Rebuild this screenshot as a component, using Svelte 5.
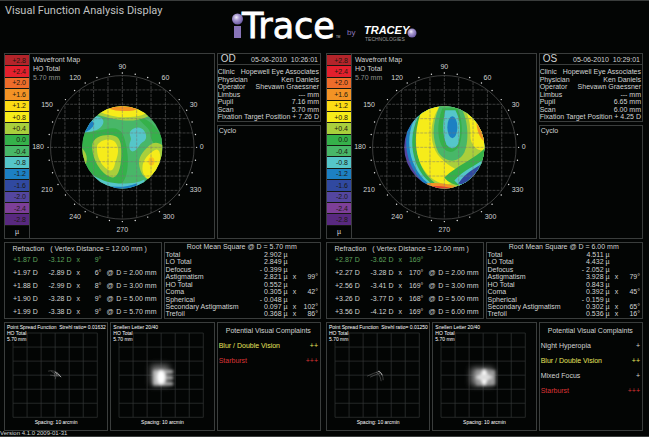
<script lang="ts">
  interface Complaint {
    name: string;
    grade: string;
    tone: 'plain' | 'warn' | 'alert';
  }

  interface Eye {
    id: string;
    time: string;
    info: [string, string][];
    diameter: string;
    refraction: string[][];
    rms: string[][];
    strehl: string;
    complaints: Complaint[];
  }

  const scale = [
    { label: '+2.8', color: '#b3242a' },
    { label: '+2.4', color: '#e3202d' },
    { label: '+2.0', color: '#ee6c2a' },
    { label: '+1.6', color: '#f39325' },
    { label: '+1.2', color: '#fcdc14' },
    { label: '+0.8', color: '#f6ec1a' },
    { label: '+0.4', color: '#a9cf3c' },
    { label: '0.0', color: '#35b14a' },
    { label: '-0.4', color: '#48b768' },
    { label: '-0.8', color: '#55c6c9' },
    { label: '-1.2', color: '#1c80c3' },
    { label: '-1.6', color: '#3049a0' },
    { label: '-2.0', color: '#5446a0' },
    { label: '-2.4', color: '#7d3f98' },
    { label: '-2.8', color: '#58297f' }
  ];

  const eyes: Eye[] = [
    {
      id: 'OD',
      time: '05-06-2010  10:26:01',
      info: [
        ['Clinic', 'Hopewell Eye Associates'],
        ['Physician', 'Ken Daniels'],
        ['Operator', 'Shevawn Graessner'],
        ['Limbus', '--- mm'],
        ['Pupil', '7.16 mm'],
        ['Scan', '5.70 mm'],
        ['Fixation Target Position', '+ 7.26 D']
      ],
      diameter: '5.70 mm',
      refraction: [
        ['+1.87 D', '-3.12 D', '9°', ''],
        ['+1.97 D', '-2.89 D', '6°', 'D = 2.00 mm'],
        ['+1.88 D', '-2.99 D', '8°', 'D = 3.00 mm'],
        ['+1.90 D', '-3.28 D', '9°', 'D = 5.00 mm'],
        ['+1.99 D', '-3.38 D', '9°', 'D = 5.70 mm']
      ],
      rms: [
        ['Total', '2.902', ''],
        ['LO Total', '2.849', ''],
        ['Defocus', '- 0.399', ''],
        ['Astigmatism', '2.821', '99°'],
        ['HO Total', '0.552', ''],
        ['Coma', '0.305', '42°'],
        ['Spherical', '- 0.048', ''],
        ['Secondary Astigmatism', '0.097', '102°'],
        ['Trefoil', '0.368', '86°']
      ],
      strehl: '0.01632',
      complaints: [
        { name: 'Blur / Double Vision', grade: '++', tone: 'warn' },
        { name: 'Starburst', grade: '+++', tone: 'alert' }
      ]
    },
    {
      id: 'OS',
      time: '05-06-2010  10:29:01',
      info: [
        ['Clinic', 'Hopewell Eye Associates'],
        ['Physician', 'Ken Daniels'],
        ['Operator', 'Shevawn Graessner'],
        ['Limbus', '--- mm'],
        ['Pupil', '6.65 mm'],
        ['Scan', '6.00 mm'],
        ['Fixation Target Position', '+ 4.25 D']
      ],
      diameter: '6.00 mm',
      refraction: [
        ['+2.87 D', '-3.62 D', '169°', ''],
        ['+2.27 D', '-3.28 D', '170°', 'D = 2.00 mm'],
        ['+2.56 D', '-3.41 D', '169°', 'D = 3.00 mm'],
        ['+3.26 D', '-3.77 D', '168°', 'D = 5.00 mm'],
        ['+3.56 D', '-4.12 D', '169°', 'D = 6.00 mm']
      ],
      rms: [
        ['Total', '4.511', ''],
        ['LO Total', '4.432', ''],
        ['Defocus', '- 2.052', ''],
        ['Astigmatism', '3.928', '79°'],
        ['HO Total', '0.843', ''],
        ['Coma', '0.392', '45°'],
        ['Spherical', '- 0.159', ''],
        ['Secondary Astigmatism', '0.302', '65°'],
        ['Trefoil', '0.536', '16°']
      ],
      strehl: '0.01250',
      complaints: [
        { name: 'Night Hyperopia', grade: '+', tone: 'plain' },
        { name: 'Blur / Double Vision', grade: '++', tone: 'warn' },
        { name: 'Mixed Focus', grade: '+', tone: 'plain' },
        { name: 'Starburst', grade: '+++', tone: 'alert' }
      ]
    }
  ];

  const cx = 92;
  const cy = 93;

  const ticks = Array.from({ length: 36 }, (_, i) => {
    const a = (i * Math.PI) / 18;
    return { x: cx + 74 * Math.cos(a), y: cy - 74 * Math.sin(a) };
  });

  const dialLabels = [
    { text: '90', x: 92, y: 15 },
    { text: '60', x: 135, y: 26 },
    { text: '30', x: 163, y: 53 },
    { text: '0', x: 171, y: 95 },
    { text: '330', x: 165, y: 138 },
    { text: '300', x: 138, y: 164 },
    { text: '270', x: 92, y: 177 },
    { text: '240', x: 45, y: 164 },
    { text: '210', x: 17, y: 138 },
    { text: '180', x: 8, y: 95 },
    { text: '150', x: 17, y: 53 },
    { text: '120', x: 45, y: 26 }
  ];

  const gridLines = [-4, -3, -2, -1, 0, 1, 2, 3, 4].map((n) => n * 14.3);
  const plotLines = [0, 1, 2, 3, 4, 5, 6].map((n) => n * 14 + 9);
</script>

<main>
  <header>
    <h1>Visual Function Analysis Display</h1>
    <svg class="logo" viewBox="0 -7 182 43" role="img" aria-label="iTrace by Tracey Technologies">
      <defs>
        <radialGradient id="ball" cx="0.4" cy="0.35" r="0.65">
          <stop offset="0" stop-color="#f4f0fc" />
          <stop offset="0.4" stop-color="#a99bd0" />
          <stop offset="1" stop-color="#6d5ba6" />
        </radialGradient>
      </defs>
      <rect x="2" y="14" width="7" height="12" fill="#8874b8" />
      <circle cx="5.500" cy="7" r="5.500" fill="url(#ball)" />
      <text class="trace" x="10" y="26">Trace</text>
      <text class="tm" x="104" y="26">TM</text>
      <text class="by" x="115" y="23">by</text>
      <text class="tracey" x="132" y="22">TRACEY</text>
      <text class="tech" x="133" y="29">TECHNOLOGIES</text>
      <circle cx="180" cy="21" r="4.500" fill="url(#ball)" />
    </svg>
  </header>

  <div class="eyes">
    {#each eyes as eye}
      <section class="eye">
        <div class="panel map">
          <div class="scale">
            {#each scale as step}
              <span class="step" style="background: {step.color}">{step.label}</span>
            {/each}
            <span class="unit">µ</span>
          </div>
          <div class="dial">
            <p class="map-title">Wavefront Map<br />HO Total<br /><span class="dim">5.70 mm</span></p>
            <svg viewBox="0 0 183 183" role="img" aria-label="Wavefront map {eye.id}">
              <defs>
                <clipPath id="disc-{eye.id}"><ellipse {cx} cy="93" rx="40" ry="41" /></clipPath>
                <clipPath id="ring-{eye.id}"><circle {cx} {cy} r="71.500" /></clipPath>
              </defs>
              <g clip-path="url(#disc-{eye.id})">
                {#if eye.id === 'OD'}
                  <rect x="50" y="50" width="86" height="86" fill="#48b768" />
                  <path d="M50 78c10 2 22-4 32-4s12 8 14 18 2 20 0 28-6 12-14 12C66 128 50 110 50 90z" fill="#35b14a" />
                  <path d="M106 62c12 2 20 10 26 22l-4 10c-4-4-8-8-8-14s-8-10-14-18z" fill="#35b14a" />
                  <path d="M66 60c8 3 18 5 26 6s18 0 26-4V46H66z" fill="#a9cf3c" />
                  <path d="M68 57c9 4 18 6 26 6s16-1 22-4V46H68z" fill="#f6ec1a" />
                  <path d="M74 52c6 5 26 7 36 2V46H76z" fill="#f39325" />
                  <path d="M50 78c10 0 18-1 22-7 3-5 0-8-6-9l-16 2z" fill="#55c6c9" />
                  <path d="M52 79c6-2 11-5 12-10l-4-4-10 8z" fill="#1c80c3" />
                  <path d="M100 77c4-5 11-5 14 0s2 9-2 11c-3 2-5 8-9 9s-5-6-3-10-2-6 0-10z" fill="#55c6c9" />
                  <path d="M62 92c0-10 12-12 20-11s9 8 9 18-2 23-8 24-21-12-21-31z" fill="#a9cf3c" />
                  <path d="M67 91c3-6 14-8 18-3s3 12 1 17-2 11-6 11-15-10-13-25z" fill="#f6ec1a" />
                  <path d="M50 92c5 4 8 10 6 17l-6 2z" fill="#a9cf3c" />
                  <path d="M109 112c-2-9 4-15 9-20s10-4 14-1v20l-9 16c-7-2-12-5-14-15z" fill="#a9cf3c" />
                  <path d="M112 114c0-9 7-15 12-18s6 4 6 10l-7 20c-7-1-11-6-11-12z" fill="#f6ec1a" />
                  <ellipse cx="121" cy="107" rx="3" ry="4" fill="#fcc41a" />
                  <path d="M62 120c10 7 20 9 30 9s16-1 22-4v12H62z" fill="#55c6c9" />
                  <path d="M76 131c10 2 20 2 30-2l4 8H76z" fill="#1c80c3" />
                {:else}
                  <rect x="50" y="50" width="86" height="86" fill="#5446a0" />
                  <ellipse cx="106" cy="88" rx="52" ry="54" fill="#1c80c3" />
                  <ellipse cx="106" cy="88" rx="49" ry="52" fill="#55c6c9" />
                  <ellipse cx="106" cy="88" rx="46" ry="51" fill="#35b14a" />
                  <ellipse cx="106" cy="88" rx="42" ry="49" fill="#a9cf3c" />
                  <path d="M68 60c5-5 12-8 20-9-8 12-11 26-7 40 4 14 16 20 26 26 5 5-4 11-12 13-22-2-40-30-27-70z" fill="#f6ec1a" />
                  <path d="M114 58c14 6 20 20 20 38-10 2-16-6-16-14s0-14-4-24z" fill="#f6ec1a" />
                  <path d="M124 66c6 6 10 14 9 22-6-4-9-12-9-22z" fill="#f39325" />
                  <path d="M88 50c-9 20-8 36-2 48 6 10 20 12 26 0 5-12 4-34-5-48z" fill="#48b768" />
                  <path d="M90 54c-6 16-5 32 1 40 6 6 12 4 16-3 4-12 3-26-2-37z" fill="#35b14a" />
                  <path d="M93 56c-3 13-3 24 1 34 4 6 9 5 12-1 3-12 2-24-3-33z" fill="#55c6c9" />
                  <ellipse cx="100" cy="73" rx="5" ry="11" fill="#1c80c3" />
                  <path d="M134 92c-10 12-28 18-42 31 4 6 16 10 26 8l16-22z" fill="#35b14a" />
                  <path d="M134 103c-10 8-22 12-32 23l8 8 24-12z" fill="#55c6c9" />
                  <path d="M134 107c-10 6-20 10-28 22l14 4z" fill="#3049a0" />
                  <path d="M74 129c10-1 22 0 32 4v3H76z" fill="#f39325" />
                  <path d="M78 132c8-1 16 0 22 2v2H78z" fill="#e3402d" />
                {/if}
              </g>
              <g class="mesh" clip-path="url(#ring-{eye.id})">
                {#each gridLines as d}
                  <path d="M{cx + d} 20v146M20 {cy + d}h146" />
                {/each}
              </g>
              <circle class="ring" {cx} {cy} r="71.500" />
              {#each ticks as t}
                <circle cx={t.x} cy={t.y} r="0.700" fill="#e8e8e8" />
              {/each}
              {#each dialLabels as l}
                <text x={l.x} y={l.y}>{l.text}</text>
              {/each}
            </svg>
          </div>
        </div>

        <div class="side">
          <div class="panel info">
            <div class="info-head">
              <h2>{eye.id}</h2>
              <span>{eye.time}</span>
            </div>
            <dl>
              {#each eye.info as [key, value]}
                <div><dt>{key}</dt><dd>{value}</dd></div>
              {/each}
            </dl>
          </div>
          <div class="panel cyclo">Cyclo</div>
        </div>

        <div class="panel refraction">
          <table>
            <caption>Refraction &nbsp; ( Vertex Distance = 12.00 mm )</caption>
            <tbody>
              {#each eye.refraction as [sphere, cylinder, axis, zone]}
                <tr class:manifest={!zone}>
                  <td class="sphere">{sphere}</td>
                  <td class="cylinder">{cylinder}</td>
                  <td class="times">x</td>
                  <td class="axis">{axis}</td>
                  <td class="at">{zone ? '@' : ''}</td>
                  <td class="zone">{zone}</td>
                </tr>
              {/each}
            </tbody>
          </table>
        </div>

        <div class="panel rms">
          <table>
            <caption>Root Mean Square @ D = {eye.diameter}</caption>
            <tbody>
              {#each eye.rms as [name, value, axis]}
                <tr>
                  <th scope="row">{name}</th>
                  <td class="value">{value} µ</td>
                  <td class="times">{axis ? 'x' : ''}</td>
                  <td class="angle">{axis}</td>
                </tr>
              {/each}
            </tbody>
          </table>
        </div>

        <figure class="panel plot">
          <p class="plot-title"><span>Point Spread Function &nbsp;Strehl ratio= {eye.strehl}</span><br /><span>HO Total</span><br /><span>5.70 mm</span></p>
          <svg viewBox="0 0 102 96" role="img" aria-label="Point spread function {eye.id}">
            {#each plotLines as p}
              <path class="rule" d="M{p - 1} 10v84M8 {p + 1}h84" />
            {/each}
            <g class="spread">
              {#if eye.id === 'OD'}
                <path d="M43 48q6-2 12 4M45 52l10 1M46 48l7 5M50 48l-1 6M52 49l-2 7" />
                <path class="bright" d="M50 49l4 3 2 2" />
              {:else}
                <path d="M40 53q6-3 13-5M43 54q6-3 10-4M49 49q4 2 5 9M52 48q4 3 4 9" />
                <path class="bright" d="M51 48q3 1 4 4" />
              {/if}
            </g>
          </svg>
          <figcaption>Spacing: 10 arcmin</figcaption>
        </figure>

        <figure class="panel plot">
          <p class="plot-title"><span>Snellen Letter 20/40</span><br /><span>HO Total</span><br /><span>5.70 mm</span></p>
          <svg viewBox="0 0 102 96" role="img" aria-label="Snellen letter {eye.id}">
            <defs>
              <filter id="soft-{eye.id}" x="-1" y="-1" width="3" height="3"><feGaussianBlur stdDeviation="3" /></filter>
              <filter id="edge-{eye.id}" x="-1" y="-1" width="3" height="3"><feGaussianBlur stdDeviation="1.400" /></filter>
            </defs>
            {#each plotLines as p}
              <path class="rule" d="M{p - 1} 10v84M8 {p + 1}h84" />
            {/each}
            {#if eye.id === 'OD'}
              <rect x="40" y="42" width="18" height="20" fill="#777" filter="url(#soft-OD)" />
              <path d="M42 47h20v3h-8v3h8v3h-8v3h8v3H42z" fill="#bbb" filter="url(#edge-OD)" />
              <ellipse cx="50" cy="54" rx="4" ry="7" fill="#fff" filter="url(#edge-OD)" />
            {:else}
              <rect x="38" y="45" width="22" height="17" fill="#888" filter="url(#soft-OS)" />
              <path d="M43 47h19v15H43z" fill="#999" filter="url(#edge-OS)" />
              <ellipse cx="51" cy="54" rx="3" ry="8" fill="#fff" filter="url(#edge-OS)" />
              <ellipse cx="51" cy="54" rx="8" ry="3" fill="#ddd" filter="url(#edge-OS)" />
            {/if}
          </svg>
          <figcaption>Spacing: 10 arcmin</figcaption>
        </figure>

        <div class="panel complaints">
          <h3>Potential Visual Complaints</h3>
          <ul>
            {#each eye.complaints as c}
              <li class={c.tone}><span>{c.name}</span><span>{c.grade}</span></li>
            {/each}
          </ul>
        </div>
      </section>
    {/each}
  </div>

  <footer>Version 4.1.0 2009-01-31</footer>
</main>

<style>
  :global(body) {
    background: #030504;
  }

  main {
    box-sizing: border-box;
    border-top: 1px solid #3a3d3c;
    border-bottom: 1px solid #3a3d3c;
    background: #030504;
    color: #d2d4d3;
    font-family: "Liberation Sans", Arial, sans-serif;
    font-size: 7px;
    line-height: 7px;
  }

  h1,
  h2,
  h3,
  p,
  dl,
  dd,
  ul,
  figure {
    margin: 0;
    padding: 0;
    font-weight: normal;
  }

  svg {
    display: block;
    width: 100%;
  }

  header {
    display: grid;
    grid-template-columns: 1fr 182px 1fr;
    min-height: 52px;
    padding: 0 9px 0 5px;
  }

  h1 {
    padding-top: 3px;
    color: #c0c2c1;
    font-family: Roboto, "Liberation Sans", sans-serif;
    font-size: 11px;
    line-height: 13px;
    white-space: nowrap;
  }

  .logo {
    margin-top: 4px;
    overflow: visible;
  }

  .trace {
    fill: #fff;
    stroke: #fff;
    stroke-width: 0.8px;
    font-family: "DejaVu Sans", sans-serif;
    font-size: 35px;
  }

  .tm {
    fill: #ccc;
    font-size: 3px;
  }

  .by {
    fill: #8874b8;
    font-size: 8px;
  }

  .tracey {
    fill: #fff;
    font-size: 11px;
    font-style: italic;
    font-weight: bold;
  }

  .tech {
    fill: #999;
    font-size: 5px;
  }

  .eyes {
    display: grid;
    grid-template-columns: 1fr 1fr;
    gap: 5px;
    padding: 0 6px 0 4px;
  }

  .eye {
    display: grid;
    grid-template-columns: repeat(6, minmax(0, 1fr));
    gap: 3px 2px;
  }

  .panel {
    box-sizing: border-box;
    border: 1px solid #3a3d3c;
  }

  .map {
    grid-column: span 4;
    display: flex;
  }

  .scale {
    flex: 0 0 24px;
    display: flex;
    flex-direction: column;
    padding-top: 1px;
    border-right: 1px solid #3a3d3c;
    color: #1c1a10;
    text-align: right;
  }

  .step {
    flex: 1;
    display: flex;
    align-items: center;
    justify-content: flex-end;
    box-sizing: border-box;
    padding-right: 3px;
    border-bottom: 1px solid #15170f;
  }

  .unit {
    padding: 2px 10px 3px 0;
    color: #ddd;
  }

  .dial {
    position: relative;
    flex: 1;
  }

  .map-title {
    position: absolute;
    top: 1px;
    left: 3px;
    line-height: 9px;
  }

  .dim {
    color: #8d908f;
  }

  .dial text {
    fill: #d2d4d3;
    font-size: 7px;
    text-anchor: middle;
  }

  .mesh {
    fill: none;
    stroke: #777;
    stroke-width: 0.5px;
    stroke-dasharray: 3 1;
  }

  .ring {
    fill: none;
    stroke: #777;
    stroke-width: 0.5px;
  }

  .side {
    grid-column: span 2;
    display: flex;
    flex-direction: column;
    gap: 3px;
  }

  .info-head {
    display: flex;
    align-items: center;
    justify-content: space-between;
    height: 10px;
    padding: 0 2px 0 3px;
    border-bottom: 1px solid #3a3d3c;
    white-space: pre;
  }

  h2 {
    font-size: 10px;
    line-height: 10px;
  }

  dl {
    display: flex;
    flex-direction: column;
    justify-content: space-between;
    box-sizing: border-box;
    min-height: 56px;
    padding: 3px 1px 1px 0;
  }

  dl div {
    display: flex;
    justify-content: space-between;
    white-space: nowrap;
  }

  .cyclo {
    flex: 1;
    padding: 1px;
  }

  .refraction,
  .rms {
    grid-column: span 3;
    min-height: 77px;
  }

  table {
    width: 100%;
    border-collapse: collapse;
    white-space: nowrap;
  }

  td,
  th {
    padding: 0;
    font-weight: normal;
    text-align: left;
  }

  .refraction caption {
    padding: 2px 6px 1px 0;
  }

  .refraction td {
    height: 13px;
  }

  .refraction .sphere {
    width: 28%;
    padding-left: 8px;
  }

  .cylinder {
    width: 18%;
  }

  .refraction .times {
    width: 5%;
  }

  .refraction .axis {
    width: 11%;
    text-align: right;
  }

  .refraction .at {
    width: 6%;
    padding-left: 5px;
  }

  .refraction .zone {
    padding-right: 4px;
    text-align: right;
  }

  .manifest {
    color: #5fa45c;
  }

  .rms {
    display: flex;
    padding: 0 2px 0 1px;
  }

  .rms caption {
    line-height: 8px;
  }

  .rms .value {
    width: 22%;
    text-align: right;
  }

  .rms .times {
    width: 9%;
    text-align: center;
  }

  .rms .angle {
    width: 11%;
    text-align: right;
  }

  .plot {
    position: relative;
    grid-column: span 2;
    min-height: 109px;
    color: #fff;
    font-size: 5px;
    line-height: 6px;
    text-align: center;
  }

  .plot-title {
    position: absolute;
    top: 1px;
    left: 2px;
    text-align: left;
    white-space: nowrap;
  }

  .plot-title span {
    background: #030504;
  }

  .rule {
    fill: none;
    stroke: #343736;
    stroke-width: 0.7px;
  }

  .spread {
    fill: none;
    stroke: #777;
    stroke-width: 0.5px;
  }

  .bright {
    stroke: #ccc;
    stroke-width: 0.8px;
  }

  .complaints {
    grid-column: span 2;
    padding: 4px 2px 0 1px;
  }

  h3 {
    font-size: 7px;
    text-align: center;
  }

  ul {
    display: flex;
    flex-direction: column;
    gap: 8px;
    padding-top: 8px;
    list-style: none;
  }

  li {
    display: flex;
    justify-content: space-between;
  }

  .warn {
    color: #e6e45e;
  }

  .alert {
    color: #dc3434;
  }

  footer {
    font-size: 6px;
    line-height: 5px;
  }
</style>
